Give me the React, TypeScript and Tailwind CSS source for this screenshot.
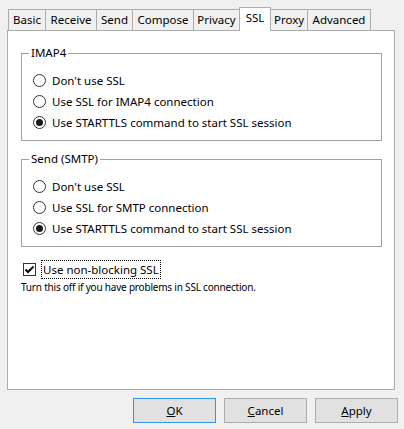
import React from "react";

const tabs = [
  { label: "Basic", w: 38 },
  { label: "Receive", w: 52 },
  { label: "Send", w: 37 },
  { label: "Compose", w: 62 },
  { label: "Privacy", w: 47 },
  { label: "SSL", w: 32, selected: true },
  { label: "Proxy", w: 38 },
  { label: "Advanced", w: 64 },
];

function Radio({ label, checked }: { label: string; checked?: boolean }) {
  return (
    <div className="flex items-center h-[21px] pl-[11px]">
      <span className="w-[13px] h-[13px] rounded-full border border-[#333333] bg-white flex items-center justify-center shrink-0">
        {checked && <span className="w-[7px] h-[7px] rounded-full bg-[#1a1a1a]" />}
      </span>
      <span className="ml-[6px] leading-[16px]">{label}</span>
    </div>
  );
}

function Group({ title, items, mt }: { title: string; items: { label: string; checked?: boolean }[]; mt: string }) {
  return (
    <div className={`relative border border-[#a0a0a0] w-[361px] h-[88px] pt-[16px] ${mt}`}>
      <span className="absolute left-[7px] top-[-9px] bg-white px-[2px] leading-[16px]">{title}</span>
      {items.map((it) => (
        <Radio key={it.label} label={it.label} checked={it.checked} />
      ))}
    </div>
  );
}

export default function App() {
  return (
    <div className="w-[404px] h-[429px] bg-[#f0f0f0] flex flex-col font-['Noto_Sans',sans-serif] text-[11.5px] text-black overflow-hidden">
      <div className="flex items-end h-[23px] mt-[7px] pl-[8px]">
        {tabs.map((t, i) => (
          <div
            key={t.label}
            style={{ width: t.w }}
            className={`${i > 0 ? "-ml-px" : ""} flex items-center justify-center border-t border-l border-r border-[#acacac] leading-[16px] ${
              t.selected ? "relative z-10 h-[24px] -mb-px bg-white pb-[3px]" : "h-[21px] bg-[#f0f0f0]"
            }`}
          >
            {t.label}
          </div>
        ))}
      </div>
      <div className="mx-[7px] w-[388px] h-[360px] border border-[#acacac] bg-white pl-[13px] pt-[22px] flex flex-col">
        <Group
          title="IMAP4"
          mt=""
          items={[
            { label: "Don't use SSL" },
            { label: "Use SSL for IMAP4 connection" },
            { label: "Use STARTTLS command to start SSL session", checked: true },
          ]}
        />
        <Group
          title="Send (SMTP)"
          mt="mt-[18px]"
          items={[
            { label: "Don't use SSL" },
            { label: "Use SSL for SMTP connection" },
            { label: "Use STARTTLS command to start SSL session", checked: true },
          ]}
        />
        <div className="flex items-center h-[19px] mt-[13px] ml-[2px]">
          <span className="w-[13px] h-[13px] border border-[#333333] bg-white flex items-center justify-center shrink-0">
            <svg width="11" height="11" viewBox="0 0 11 11">
              <path d="M1.5 5.5 L4 8 L9.5 2.5" stroke="#000" strokeWidth="2" fill="none" />
            </svg>
          </span>
          <span className="ml-[5px] h-[19px] border border-dotted border-black px-[1px] flex items-center leading-[16px]">
            Use non-blocking SSL
          </span>
        </div>
        <div className="mt-[2px] text-[10px] tracking-[-0.2px] leading-[13px]">
          Turn this off if you have problems in SSL connection.
        </div>
      </div>
      <div className="flex justify-end gap-[8px] pr-[6px] mt-[8px]">
        <button className="w-[83px] h-[25px] bg-[#e1e1e1] border border-[#3a93e6] flex items-center justify-center">
          <span><span className="underline">O</span>K</span>
        </button>
        <button className="w-[83px] h-[25px] bg-[#e1e1e1] border border-[#adadad] flex items-center justify-center">
          <span><span className="underline">C</span>ancel</span>
        </button>
        <button className="w-[83px] h-[25px] bg-[#e1e1e1] border border-[#adadad] flex items-center justify-center">
          <span><span className="underline">A</span>pply</span>
        </button>
      </div>
    </div>
  );
}
